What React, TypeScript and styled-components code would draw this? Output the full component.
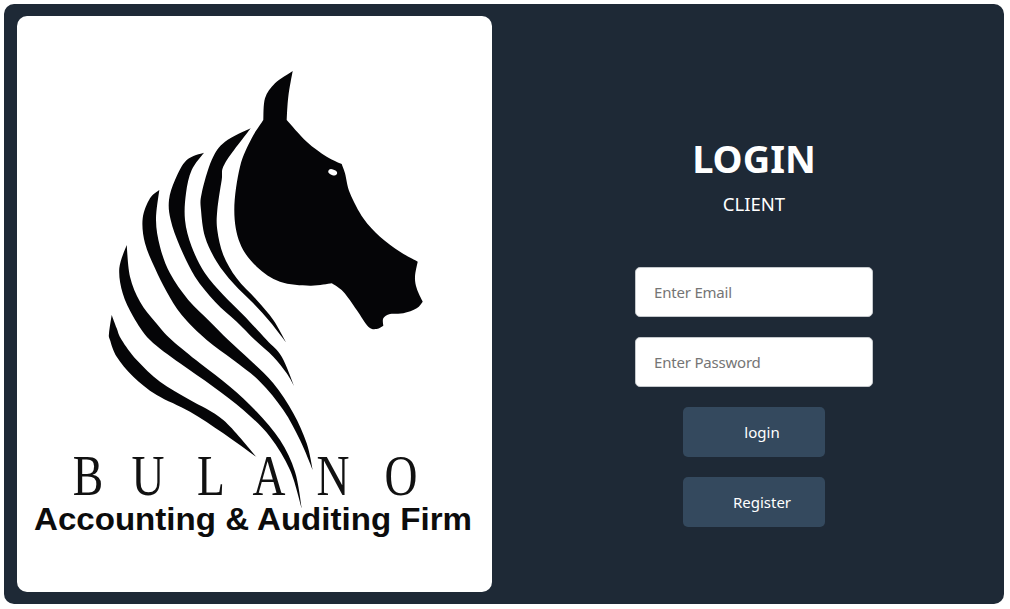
import React from "react";
import styled, { createGlobalStyle } from "styled-components";

type Pt = [number, number];

const GlobalStyle = createGlobalStyle`
  html, body { margin: 0; padding: 0; background: #ffffff; }
  body { font-family: "Noto Sans", "Open Sans", sans-serif; }
`;

const Page = styled.main`
  width: 1000px;
  height: 600px;
  margin: 4px 0 0 4px;
  display: grid;
  grid-template-columns: 500px 500px;
  background: #1e2936;
  border-radius: 10px;
  overflow: hidden;
`;

const LogoColumn = styled.section`
  padding: 12px 12px 12px 13px;
  display: flex;
`;

const LogoCard = styled.div`
  flex: 1;
  background: #ffffff;
  border-radius: 10px;
  overflow: hidden;
`;

const LogoSvg = styled.svg`
  display: block;
  width: 475px;
  height: 576px;
`;

const LoginColumn = styled.section`
  display: flex;
  flex-direction: column;
  align-items: center;
  padding-top: 129px;
`;

const Title = styled.h1`
  margin: 0;
  font-size: 38px;
  line-height: 50px;
  font-weight: 700;
  color: #ffffff;
`;

const Subtitle = styled.p`
  margin: 7px 0 0;
  font-size: 18.5px;
  line-height: 28px;
  color: #ffffff;
`;

const Form = styled.form`
  margin-top: 49px;
  display: flex;
  flex-direction: column;
  align-items: center;
  gap: 20px;
`;

const Input = styled.input`
  box-sizing: border-box;
  width: 238px;
  height: 50px;
  padding: 0 18px;
  background: #ffffff;
  border: 1px solid #c4c8cc;
  border-radius: 5px;
  font-family: inherit;
  font-size: 15px;
  letter-spacing: -0.2px;
  color: #222;
  outline: none;
  &::placeholder { color: #757575; opacity: 1; }
`;

const Button = styled.button`
  box-sizing: border-box;
  width: 142px;
  height: 50px;
  padding: 0 0 0 16px;
  background: #34495e;
  border: 0;
  border-radius: 5px;
  font-family: inherit;
  font-size: 15px;
  color: #ffffff;
`;

/* Tracing frames of the logo, mapped onto page coordinates. */
const frame = (ox: number, oy: number) => (pts: Pt[]): Pt[] =>
  pts.map(([x, y]) => [x / 3 + ox, y / 3 + oy]);
const a = frame(100, 60);
const c = frame(100, 180);
const d = frame(100, 340);

const spline = (p: Pt[]): string => {
  let out = "";
  for (let i = 0; i < p.length - 1; i++) {
    const p0 = p[Math.max(i - 1, 0)];
    const p1 = p[i];
    const p2 = p[i + 1];
    const p3 = p[Math.min(i + 2, p.length - 1)];
    const c1x = p1[0] + (p2[0] - p0[0]) / 6;
    const c1y = p1[1] + (p2[1] - p0[1]) / 6;
    const c2x = p2[0] - (p3[0] - p1[0]) / 6;
    const c2y = p2[1] - (p3[1] - p1[1]) / 6;
    out += `C${c1x.toFixed(1)} ${c1y.toFixed(1)} ${c2x.toFixed(1)} ${c2y.toFixed(1)} ${p2[0].toFixed(1)} ${p2[1].toFixed(1)}`;
  }
  return out;
};

const shape = (...runs: Pt[][]): string => {
  const first = runs[0][0];
  return `M${first[0].toFixed(1)} ${first[1].toFixed(1)}` + runs.map(spline).join("") + "Z";
};

const head = shape(
  a([[578, 33], [525, 70], [495, 115], [490, 180]]),
  a([[490, 180], [455, 235], [420, 320], [403, 450], [420, 550], [470, 620], [540, 665], [630, 677], [695, 670]]),
  a([[695, 670], [730, 695], [770, 750], [805, 800], [830, 807], [850, 797]]),
  a([[850, 797], [850, 775], [870, 762], [910, 760], [950, 745], [968, 725]]),
  a([[968, 725], [950, 685], [945, 650], [953, 605]]),
  a([[953, 605], [900, 575], [840, 530], [790, 475], [750, 400], [735, 340], [725, 312]]),
  a([[725, 312], [680, 290], [620, 245], [560, 180]]),
  a([[560, 180], [565, 110], [578, 33]])
);

const stripes = [
  shape(
    [
      ...a([[452, 205], [375, 245], [335, 300]]),
      ...c([[305, 40], [303, 90], [315, 170], [350, 245], [400, 310], [460, 370], [510, 425], [558, 487]]),
    ],
    [
      ...c([[558, 487], [520, 420], [470, 360], [410, 295], [370, 225], [352, 150], [352, 90], [365, 0]]),
      ...a([[375, 310], [452, 205]]),
    ]
  ),
  shape(
    [
      ...a([[312, 278], [260, 300], [225, 360]]),
      ...c([[207, 60], [212, 120], [240, 200], [285, 290], [345, 365], [410, 425], [465, 480]]),
      ...d([[520, 50], [560, 100], [583, 140]]),
    ],
    [
      ...d([[583, 140], [545, 50], [500, 0]]),
      ...c([[430, 405], [370, 345], [315, 280], [275, 200], [255, 120], [258, 40]]),
      ...a([[275, 330], [312, 278]]),
    ]
  ),
  shape(
    [
      ...c([[178, 30], [150, 55], [128, 115], [135, 190], [165, 265], [200, 335], [245, 405], [320, 480]]),
      ...d([[400, 60], [480, 125], [550, 210], [600, 300], [638, 390]]),
    ],
    [
      ...d([[638, 390], [620, 310], [580, 220], [520, 130], [450, 60], [385, 0]]),
      ...c([[330, 425], [265, 360], [210, 280], [180, 200], [168, 120], [178, 30]]),
    ]
  ),
  shape(
    [
      ...c([[80, 195], [58, 265], [68, 340], [100, 410], [150, 480]]),
      ...d([[240, 70], [340, 140], [430, 210], [510, 290], [570, 390], [605, 505]]),
    ],
    [
      ...d([[605, 505], [585, 395], [540, 300], [470, 215], [390, 140], [300, 70], [215, 0]]),
      ...c([[165, 425], [120, 365], [90, 290], [80, 195]]),
    ]
  ),
  shape(
    [
      ...c([[35, 405], [27, 460]]),
      ...d([[30, 0], [50, 50], [100, 110], [170, 165], [270, 215], [370, 280], [470, 352]]),
    ],
    [
      ...d([[470, 352], [370, 240], [270, 180], [180, 125], [110, 60], [65, 0]]),
      ...c([[50, 445], [35, 405]]),
    ]
  ),
];

const letters: [string, number][] = [
  ["B", 88],
  ["U", 148],
  ["L", 211],
  ["A", 269],
  ["N", 333],
  ["O", 401],
];

const Logo = () => (
  <LogoSvg viewBox="17 16 475 576" role="img" aria-label="Bulano Accounting & Auditing Firm">
    <path d={head} fill="#050507" />
    <ellipse cx="332.7" cy="172.3" rx="4.6" ry="2.8" transform="rotate(20 332.7 172.3)" fill="#ffffff" />
    {stripes.map((p) => (
      <path key={p.slice(0, 24)} d={p} fill="#050507" />
    ))}
    {letters.map(([ch, x]) => (
      <text
        key={ch}
        transform={`translate(${x} 495) scale(0.8 1)`}
        textAnchor="middle"
        fontFamily="'Liberation Serif', serif"
        fontSize="57"
        fill="#111"
      >
        {ch}
      </text>
    ))}
    <text
      x="34"
      y="530"
      textLength="438"
      lengthAdjust="spacingAndGlyphs"
      fontFamily="'Liberation Sans', sans-serif"
      fontWeight="700"
      fontSize="31"
      fill="#0c0c0c"
    >
      Accounting &amp; Auditing Firm
    </text>
  </LogoSvg>
);

export default function App() {
  return (
    <>
      <GlobalStyle />
      <Page>
        <LogoColumn>
          <LogoCard>
            <Logo />
          </LogoCard>
        </LogoColumn>
        <LoginColumn>
          <Title>LOGIN</Title>
          <Subtitle>CLIENT</Subtitle>
          <Form onSubmit={(e) => e.preventDefault()}>
            <Input type="email" placeholder="Enter Email" />
            <Input type="password" placeholder="Enter Password" />
            <Button type="submit">login</Button>
            <Button type="button">Register</Button>
          </Form>
        </LoginColumn>
      </Page>
    </>
  );
}
